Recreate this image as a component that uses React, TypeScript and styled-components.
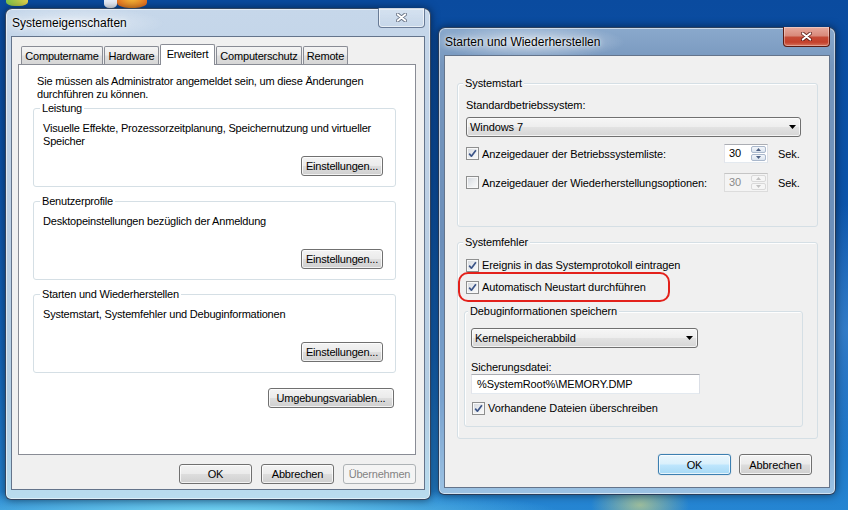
import React from "react";
import styled, { createGlobalStyle, css } from "styled-components";

const GlobalStyle = createGlobalStyle`
  html, body { margin: 0; padding: 0; }
  body {
    font-family: "Liberation Sans", Arial, sans-serif;
    font-size: 11px;
    color: #000;
  }
  * { box-sizing: border-box; }
`;

const Desktop = styled.div`
  position: relative;
  width: 848px;
  height: 510px;
  overflow: hidden;
  background:
    radial-gradient(ellipse 70px 40px at 640px 505px, rgba(235, 225, 120, 0.6), rgba(235, 225, 120, 0) 70%),
    radial-gradient(ellipse 460px 40px at 220px 515px, rgba(130, 225, 245, 0.95), rgba(130, 225, 245, 0) 75%),
    radial-gradient(ellipse 260px 180px at 848px 330px, rgba(70, 140, 210, 0.6), rgba(70, 140, 210, 0) 70%),
    linear-gradient(180deg, #0a4b9f 0%, #0b52a8 35%, #1465ba 70%, #2585d2 100%);
`;

const DesktopIcon = styled.div<{ $x: number; $y: number; $w: number; $h: number; $bg: string }>`
  position: absolute;
  left: ${(p) => p.$x}px;
  top: ${(p) => p.$y}px;
  width: ${(p) => p.$w}px;
  height: ${(p) => p.$h}px;
  border-radius: 0 0 40% 40%;
  background: ${(p) => p.$bg};
`;

const Window = styled.div<{
  $x: number;
  $y: number;
  $w: number;
  $h: number;
  $pb: number;
  $active?: boolean;
}>`
  position: absolute;
  left: ${(p) => p.$x}px;
  top: ${(p) => p.$y}px;
  width: ${(p) => p.$w}px;
  height: ${(p) => p.$h}px;
  display: flex;
  flex-direction: column;
  padding: 0 5px ${(p) => p.$pb}px;
  border: 1px solid rgba(16, 32, 60, 0.8);
  border-radius: 7px 7px 6px 6px;
  box-shadow: inset 0 0 0 1px rgba(255, 255, 255, 0.55), 0 0 9px rgba(0, 0, 0, 0.5);
  ${(p) =>
    p.$active
      ? css`
          background:
            radial-gradient(ellipse 120px 22px at 90px 14px, rgba(255, 255, 255, 0.6), rgba(255, 255, 255, 0) 80%),
            linear-gradient(180deg, #8aa9cc 0%, #7696bd 8%, #6c8fba 45%, #7aa3cf 80%, #9cc2e3 100%);
        `
      : css`
          background:
            radial-gradient(ellipse 110px 20px at 70px 14px, rgba(255, 255, 255, 0.5), rgba(255, 255, 255, 0) 80%),
            linear-gradient(180deg, #c6d7ea 0%, #bccfe4 40%, #b3cde3 80%, #b9dcee 100%);
        `}
`;

const TitleBar = styled.div`
  height: 27px;
  display: flex;
  justify-content: space-between;
  align-items: flex-start;
  flex: none;
`;

const Title = styled.span`
  margin: 7px 0 0 1px;
  font-size: 12px;
  line-height: 14px;
  color: #000;
  text-shadow: 0 0 6px rgba(255, 255, 255, 0.95), 0 0 2px rgba(255, 255, 255, 0.9);
`;

const CloseButton = styled.div<{ $active?: boolean }>`
  margin-top: -1px;
  width: 47px;
  height: 20px;
  display: flex;
  align-items: center;
  justify-content: center;
  border-radius: 0 0 4px 4px;
  ${(p) =>
    p.$active
      ? css`
          border: 1px solid #5a1a12;
          border-top: none;
          background: linear-gradient(180deg, #e7aa9e 0%, #d98a7b 45%, #c54a36 55%, #c4402b 80%, #d6755f 100%);
          box-shadow: inset 0 0 0 1px rgba(255, 255, 255, 0.35);
        `
      : css`
          border: 1px solid rgba(70, 90, 120, 0.75);
          border-top: none;
          background: linear-gradient(180deg, rgba(230, 238, 247, 0.5) 0%, rgba(200, 215, 232, 0.4) 100%);
          box-shadow: inset 0 0 0 1px rgba(255, 255, 255, 0.6);
        `}
`;

const Client = styled.div<{ $pad: string; $ls: number }>`
  flex: 1;
  display: flex;
  flex-direction: column;
  padding: ${(p) => p.$pad};
  background: #f0f0f0;
  border: 1px solid rgba(40, 62, 95, 0.7);
  letter-spacing: ${(p) => p.$ls}px;
`;

const TabRow = styled.div`
  display: flex;
  align-items: flex-end;
  gap: 1px;
  height: 21px;
  padding-left: 3px;
  margin-bottom: -1px;
  position: relative;
  z-index: 1;
  flex: none;
`;

const Tab = styled.div<{ $w: number; $selected?: boolean }>`
  width: ${(p) => p.$w}px;
  display: flex;
  align-items: center;
  justify-content: center;
  border: 1px solid #898c95;
  border-bottom: none;
  border-radius: 2px 2px 0 0;
  ${(p) =>
    p.$selected
      ? css`
          height: 21px;
          background: #fff;
          padding-bottom: 3px;
        `
      : css`
          height: 18px;
          margin-bottom: 1px;
          background: linear-gradient(180deg, #f4f4f4 0%, #ececec 45%, #dedede 55%, #d6d6d6 100%);
        `}
`;

const TabPanel = styled.div`
  flex: 1;
  display: flex;
  flex-direction: column;
  padding: 10px 19px 0 14px;
  background: #fff;
  border: 1px solid #898c95;
`;

const Intro = styled.div`
  margin-left: 4px;
  line-height: 13px;
`;

const Group = styled.div<{ $pad: string; $mt: number; $ml?: number }>`
  display: flex;
  flex-direction: column;
  margin-top: ${(p) => p.$mt}px;
  margin-left: ${(p) => p.$ml ?? 0}px;
  padding: ${(p) => p.$pad};
  border: 1px solid #d5dfe5;
  border-radius: 3px;
  box-shadow: inset 1px 1px 0 rgba(255, 255, 255, 0.9);
`;

const Legend = styled.span<{ $bg: string }>`
  align-self: flex-start;
  margin: -7px 0 0 -3px;
  padding: 0 2px;
  line-height: 13px;
  background: ${(p) => p.$bg};
`;

const Desc = styled.div`
  margin-top: 7px;
  line-height: 13px;
  min-height: 26px;
`;

const Button = styled.button<{ $w: number; $h?: number; $default?: boolean; $mt?: number }>`
  width: ${(p) => p.$w}px;
  height: ${(p) => p.$h ?? 20}px;
  margin-top: ${(p) => p.$mt ?? 0}px;
  padding: 0;
  flex: none;
  font: inherit;
  letter-spacing: inherit;
  color: #000;
  border: 1px solid #707070;
  border-radius: 3px;
  background: linear-gradient(180deg, #f3f3f3 0%, #ebebeb 48%, #dddddd 52%, #cfcfcf 100%);
  box-shadow: inset 0 0 0 1px rgba(255, 255, 255, 0.75);
  ${(p) =>
    p.$default &&
    css`
      border-color: #3c7fb1;
      background: linear-gradient(180deg, #eaf6fd 0%, #d9f0fc 48%, #bee6fd 52%, #a7d9f5 100%);
      box-shadow: inset 0 0 0 1px rgba(255, 255, 255, 0.7), 0 0 1px rgba(60, 127, 177, 0.6);
    `}
  &:disabled {
    color: #838383;
    border-color: #adb2b5;
    background: #f4f4f4;
    box-shadow: none;
  }
`;

const GroupButton = styled(Button)`
  align-self: flex-end;
`;

const ButtonRow = styled.div<{ $gap: number; $mt: number; $pr?: number }>`
  display: flex;
  justify-content: flex-end;
  gap: ${(p) => p.$gap}px;
  margin-top: ${(p) => p.$mt}px;
  padding-right: ${(p) => p.$pr ?? 0}px;
  flex: none;
`;

const Label = styled.div<{ $mt: number }>`
  margin-top: ${(p) => p.$mt}px;
  line-height: 14px;
`;

const Select = styled.div<{ $w: number; $mt: number }>`
  width: ${(p) => p.$w}px;
  height: 20px;
  margin-top: ${(p) => p.$mt}px;
  display: flex;
  align-items: center;
  justify-content: space-between;
  padding: 0 4px 0 3px;
  border: 1px solid #707070;
  border-radius: 3px;
  background: linear-gradient(180deg, #f6f6f6 0%, #eeeeee 48%, #e2e2e2 52%, #d6d6d6 100%);
  box-shadow: inset 0 0 0 1px rgba(255, 255, 255, 0.7);
`;

const TextInput = styled.div<{ $w: number }>`
  width: ${(p) => p.$w}px;
  height: 20px;
  padding-left: 5px;
  line-height: 18px;
  background: #fff;
  border: 1px solid;
  border-color: #abadb3 #dbdfe6 #e3e9ef #e2e3ea;
`;

const TimeoutGrid = styled.div`
  margin-top: 7px;
  display: grid;
  grid-template-columns: 248px 44px auto;
  grid-auto-rows: 19px;
  column-gap: 10px;
  row-gap: 10px;
  align-items: center;
`;

const CheckRow = styled.div<{ $mt?: number; $ml?: number }>`
  position: relative;
  display: flex;
  align-items: center;
  gap: 3px;
  height: 16px;
  margin-top: ${(p) => p.$mt ?? 0}px;
  margin-left: ${(p) => p.$ml ?? 0}px;
`;

const Box = styled.span`
  width: 13px;
  height: 13px;
  flex: none;
  display: flex;
  align-items: center;
  justify-content: center;
  border: 1px solid #8e8f8f;
  background: linear-gradient(135deg, #d3d7dd 0%, #eef0f2 60%, #fafafa 100%);
  box-shadow: inset 0 0 0 1px #f8f8f8;
`;

const Highlight = styled.div`
  position: absolute;
  left: -8px;
  top: -7px;
  width: 212px;
  height: 30px;
  border: 2px solid #e3211b;
  border-radius: 10px;
  pointer-events: none;
`;

const Spin = styled.div<{ $disabled?: boolean }>`
  width: 44px;
  height: 19px;
  display: flex;
  background: ${(p) => (p.$disabled ? "#f4f4f4" : "#fff")};
  border: 1px solid;
  border-color: ${(p) =>
    p.$disabled ? "#c5c5c5 #dcdcdc #dcdcdc #dcdcdc" : "#abadb3 #dbdfe6 #e3e9ef #e2e3ea"};
`;

const SpinValue = styled.span<{ $disabled?: boolean }>`
  flex: 1;
  padding-left: 4px;
  line-height: 17px;
  color: ${(p) => (p.$disabled ? "#8a8a8a" : "#000")};
`;

const SpinArrows = styled.div`
  width: 16px;
  display: flex;
  flex-direction: column;
  gap: 1px;
  padding: 1px 1px 1px 0;
`;

const SpinBtn = styled.div<{ $disabled?: boolean }>`
  flex: 1;
  display: flex;
  align-items: center;
  justify-content: center;
  border: 1px solid ${(p) => (p.$disabled ? "#d9d9d9" : "#aab8cc")};
  border-radius: 2px;
  background: ${(p) =>
    p.$disabled ? "#f6f6f6" : "linear-gradient(180deg, #f3f6fa 0%, #dbe4ef 100%)"};
`;

const Check = () => (
  <svg width="11" height="11" viewBox="0 0 11 11">
    <path d="M2.2 5.6 L4.4 8.2 L8.9 2.2" stroke="#3b5487" strokeWidth="1.7" fill="none" strokeLinejoin="round" />
  </svg>
);

const Checkbox = ({ checked }: { checked?: boolean }) => <Box>{checked && <Check />}</Box>;

const Arrow = ({ up, color }: { up?: boolean; color: string }) => (
  <svg width="5" height="3" viewBox="0 0 5 3">
    <path d={up ? "M0 3 L2.5 0 L5 3 Z" : "M0 0 L5 0 L2.5 3 Z"} fill={color} />
  </svg>
);

const DropArrow = () => (
  <svg width="7" height="4" viewBox="0 0 7 4">
    <path d="M0 0 L7 0 L3.5 4 Z" fill="#000" />
  </svg>
);

const CloseGlyph = ({ active }: { active?: boolean }) => (
  <svg width="11" height="9" viewBox="0 0 11 9">
    <path
      d="M1.8 1.4 L9.2 7.6 M9.2 1.4 L1.8 7.6"
      stroke={active ? "rgba(70,10,5,0.8)" : "rgba(60,70,90,0.75)"}
      strokeWidth="3.6"
      strokeLinecap="round"
      fill="none"
    />
    <path d="M1.8 1.4 L9.2 7.6 M9.2 1.4 L1.8 7.6" stroke="#fff" strokeWidth="2" strokeLinecap="round" fill="none" />
  </svg>
);

const SpinBox = ({ value, disabled }: { value: string; disabled?: boolean }) => (
  <Spin $disabled={disabled}>
    <SpinValue $disabled={disabled}>{value}</SpinValue>
    <SpinArrows>
      <SpinBtn $disabled={disabled}>
        <Arrow up color={disabled ? "#c2c2c2" : "#4d6185"} />
      </SpinBtn>
      <SpinBtn $disabled={disabled}>
        <Arrow color={disabled ? "#c2c2c2" : "#4d6185"} />
      </SpinBtn>
    </SpinArrows>
  </Spin>
);

export default function App() {
  return (
    <Desktop>
      <GlobalStyle />
      <DesktopIcon $x={6} $y={-4} $w={22} $h={10} $bg="linear-gradient(90deg,#7cc24a,#e6d34a)" />
      <DesktopIcon $x={104} $y={-2} $w={13} $h={10} $bg="#e8eef8" />
      <DesktopIcon $x={117} $y={-6} $w={30} $h={14} $bg="radial-gradient(circle at 50% 20%, #f7c23a, #e4611b)" />

      <Window $x={5} $y={8} $w={426} $h={492} $pb={9}>
        <TitleBar>
          <Title>Systemeigenschaften</Title>
          <CloseButton>
            <CloseGlyph />
          </CloseButton>
        </TitleBar>
        <Client $pad="7px 8px 5px 6px" $ls={-0.2}>
          <TabRow>
            <Tab $w={82}>Computername</Tab>
            <Tab $w={55}>Hardware</Tab>
            <Tab $w={55} $selected>
              Erweitert
            </Tab>
            <Tab $w={86}>Computerschutz</Tab>
            <Tab $w={45}>Remote</Tab>
          </TabRow>
          <TabPanel>
            <Intro>
              Sie müssen als Administrator angemeldet sein, um diese Änderungen
              <br />
              durchführen zu können.
            </Intro>
            <Group $mt={7} $pad="0 12px 10px 9px">
              <Legend $bg="#fff">Leistung</Legend>
              <Desc>
                Visuelle Effekte, Prozessorzeitplanung, Speichernutzung und virtueller
                <br />
                Speicher
              </Desc>
              <GroupButton $w={82} $mt={8}>
                Einstellungen...
              </GroupButton>
            </Group>
            <Group $mt={14} $pad="0 12px 10px 9px">
              <Legend $bg="#fff">Benutzerprofile</Legend>
              <Desc>Desktopeinstellungen bezüglich der Anmeldung</Desc>
              <GroupButton $w={82} $mt={8}>
                Einstellungen...
              </GroupButton>
            </Group>
            <Group $mt={14} $pad="0 12px 10px 9px">
              <Legend $bg="#fff">Starten und Wiederherstellen</Legend>
              <Desc>Systemstart, Systemfehler und Debuginformationen</Desc>
              <GroupButton $w={82} $mt={8}>
                Einstellungen...
              </GroupButton>
            </Group>
            <ButtonRow $gap={0} $mt={15} $pr={2}>
              <Button $w={126}>Umgebungsvariablen...</Button>
            </ButtonRow>
          </TabPanel>
          <ButtonRow $gap={9} $mt={9}>
            <Button $w={73}>OK</Button>
            <Button $w={73}>Abbrechen</Button>
            <Button $w={73} disabled>
              Übernehmen
            </Button>
          </ButtonRow>
        </Client>
      </Window>

      <Window $x={438} $y={27} $w={398} $h={468} $pb={6} $active>
        <TitleBar>
          <Title>Starten und Wiederherstellen</Title>
          <CloseButton $active>
            <CloseGlyph active />
          </CloseButton>
        </TitleBar>
        <Client $pad="27px 11px 11px 12px" $ls={-0.1}>
          <Group $mt={0} $pad="0 14px 34px 8px">
            <Legend $bg="#f0f0f0">Systemstart</Legend>
            <Label $mt={8}>Standardbetriebssystem:</Label>
            <Select $w={335} $mt={5}>
              <span>Windows 7</span>
              <DropArrow />
            </Select>
            <TimeoutGrid>
              <CheckRow>
                <Checkbox checked />
                Anzeigedauer der Betriebssystemliste:
              </CheckRow>
              <SpinBox value="30" />
              <span>Sek.</span>
              <CheckRow>
                <Checkbox />
                Anzeigedauer der Wiederherstellungsoptionen:
              </CheckRow>
              <SpinBox value="30" disabled />
              <span>Sek.</span>
            </TimeoutGrid>
          </Group>
          <Group $mt={15} $pad="0 14px 11px 8px">
            <Legend $bg="#f0f0f0">Systemfehler</Legend>
            <CheckRow $mt={8}>
              <Checkbox checked />
              Ereignis in das Systemprotokoll eintragen
            </CheckRow>
            <CheckRow $mt={6}>
              <Checkbox checked />
              Automatisch Neustart durchführen
              <Highlight />
            </CheckRow>
            <Group $mt={16} $ml={-2} $pad="0 6px 10px 6px">
              <Legend $bg="#f0f0f0">Debuginformationen speichern</Legend>
              <Select $w={227} $mt={10}>
                <span>Kernelspeicherabbild</span>
                <DropArrow />
              </Select>
              <Label $mt={12}>Sicherungsdatei:</Label>
              <TextInput $w={229}>%SystemRoot%\MEMORY.DMP</TextInput>
              <CheckRow $mt={6} $ml={1}>
                <Checkbox checked />
                Vorhandene Dateien überschreiben
              </CheckRow>
            </Group>
          </Group>
          <ButtonRow $gap={8} $mt={15} $pr={6}>
            <Button $w={73} $h={21} $default>
              OK
            </Button>
            <Button $w={73} $h={21}>
              Abbrechen
            </Button>
          </ButtonRow>
        </Client>
      </Window>
    </Desktop>
  );
}
